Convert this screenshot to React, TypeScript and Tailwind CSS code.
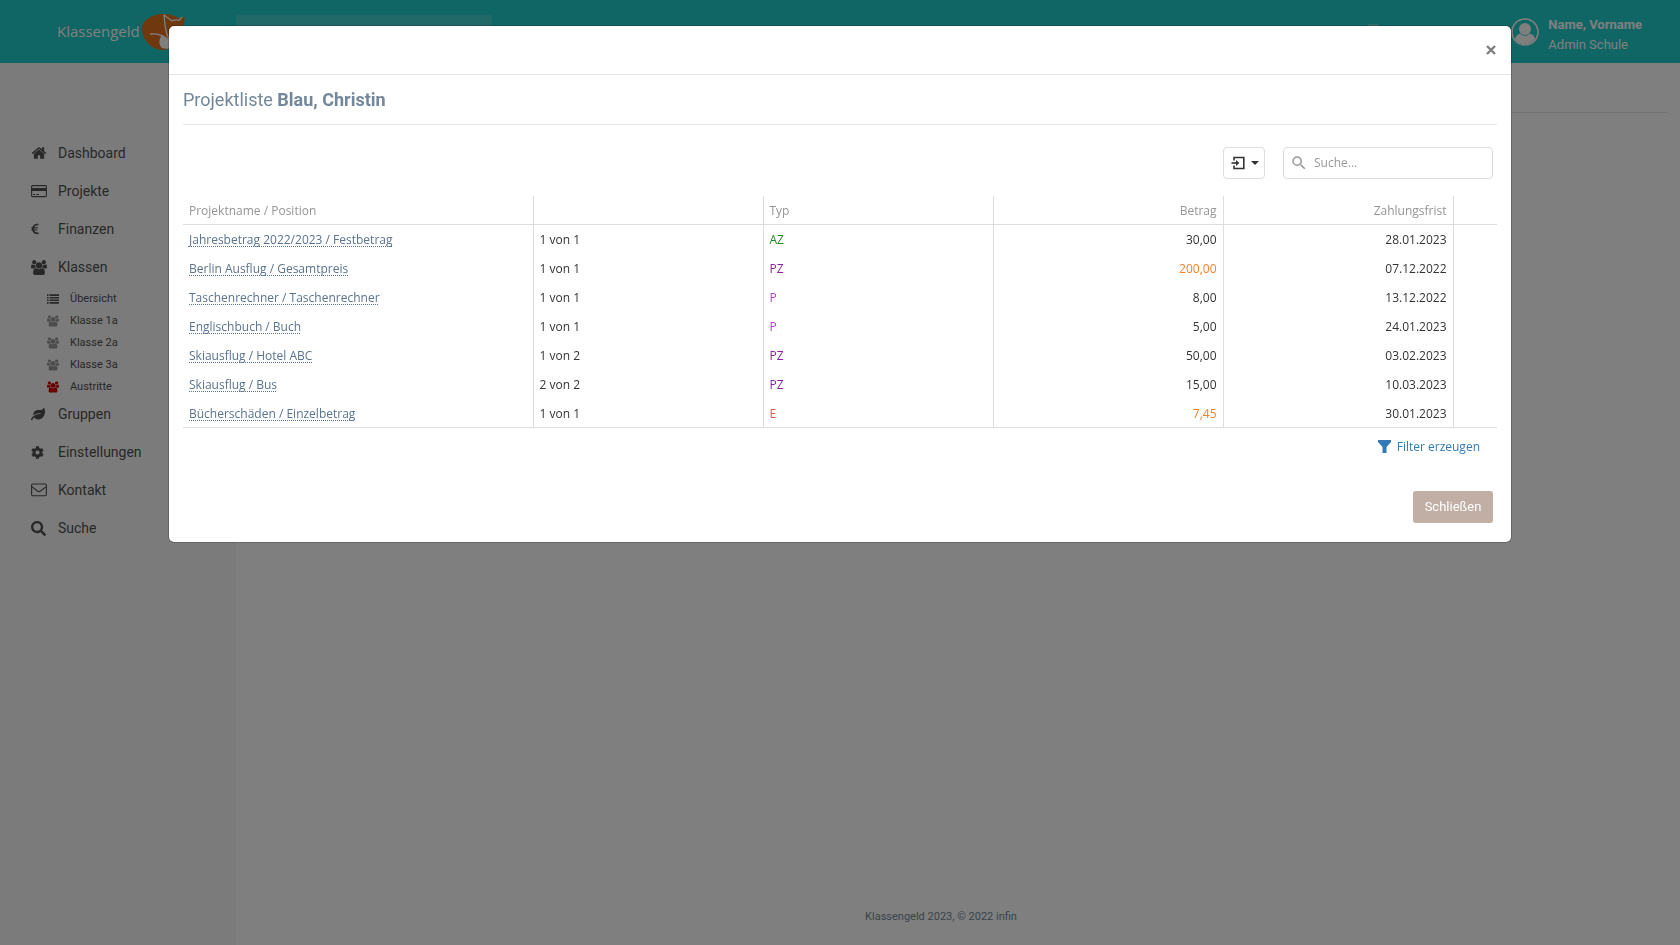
import type { ReactNode } from "react";
import { FaCog, FaEuroSign, FaLeaf, FaSearch } from "react-icons/fa";
import { MdSearch } from "react-icons/md";

function HomeIcon() {
  return (
    <svg viewBox="0 0 1792 1792" className="size-4" fill="currentColor" aria-hidden="true">
      <path d="M1472 992v480q0 26-19 45t-45 19h-384v-384h-256v384h-384q-26 0-45-19t-19-45v-480q0-1 .5-3t.5-3l575-474 575 474q1 2 1 6zm223-69l-62 74q-8 9-21 11h-3q-13 0-21-7l-692-577-692 577q-12 8-24 7-13-2-21-11l-62-74q-8-10-7-23.5t11-21.5l719-599q32-26 76-26t76 26l244 204v-195q0-14 9-23t23-9h192q14 0 23 9t9 23v408l219 182q10 8 11 21.5t-7 23.5z" />
    </svg>
  );
}

function CardIcon() {
  return (
    <svg viewBox="0 0 16 14" className="h-3.5 w-4" aria-hidden="true">
      <rect x="0.6" y="1.6" width="14.8" height="11" rx="0.8" fill="none" stroke="currentColor" strokeWidth="1.1" />
      <path d="M0.5 4h15v3h-15zM2 10h2v1H2zM5 10h3v1H5z" fill="currentColor" />
    </svg>
  );
}

function UsersIcon({ className }: { className: string }) {
  return (
    <svg viewBox="0 0 1920 1792" className={className} fill="currentColor" aria-hidden="true">
      <path d="M593 896q-162 5-265 128h-134q-82 0-138-40.5t-56-118.5q0-353 124-353 6 0 43.5 21t97.5 42.5 119 21.5q67 0 133-23-5 37-5 66 0 139 81 256zm1071 637q0 120-73 189.5t-194 69.5h-874q-121 0-194-69.5t-73-189.5q0-53 3.5-103.5t14-109 26.5-108.5 43-97.5 62-81 85.5-53.5 111.5-20q10 0 43 21.5t73 48 107 48 135 21.5 135-21.5 107-48 73-48 43-21.5q61 0 111.5 20t85.5 53.5 62 81 43 97.5 26.5 108.5 14 109 3.5 103.5zm-1024-1277q0 106-75 181t-181 75-181-75-75-181 75-181 181-75 181 75 75 181zm704 384q0 159-112.5 271.5t-271.5 112.5-271.5-112.5-112.5-271.5 112.5-271.5 271.5-112.5 271.5 112.5 112.5 271.5zm576 225q0 78-56 118.5t-138 40.5h-134q-103-123-265-128 81-117 81-256 0-29-5-66 66 23 133 23 59 0 119-21.5t97.5-42.5 43.5-21q124 0 124 353zm-128-609q0 106-75 181t-181 75-181-75-75-181 75-181 181-75 181 75 75 181z" />
    </svg>
  );
}

function ListIcon() {
  return (
    <svg viewBox="0 0 12 10" className="h-2.5 w-3" fill="currentColor" aria-hidden="true">
      <path d="M0 0.3h1.6v1.6H0zM2.6 0.3H12v1.6H2.6zM0 2.9h1.6v1.6H0zM2.6 2.9H12v1.6H2.6zM0 5.5h1.6v1.6H0zM2.6 5.5H12v1.6H2.6zM0 8.1h1.6v1.6H0zM2.6 8.1H12v1.6H2.6z" />
    </svg>
  );
}

function EnvelopeIcon() {
  return (
    <svg viewBox="0 0 16 14" className="h-3.5 w-4" fill="none" stroke="currentColor" strokeWidth="1.1" aria-hidden="true">
      <rect x="0.6" y="1" width="14.8" height="11.8" rx="1.2" />
      <path d="M0.8 3.6L6.4 8Q8 9.2 9.6 8L15.2 3.6" />
    </svg>
  );
}

function FoxLogo() {
  return (
    <svg viewBox="0 0 46 38" className="h-[38px] w-[46px]" aria-hidden="true">
      <path d="M1 16C1 7 11 1 23 1C28 1 33 2 37 5L44 4C43 9 43 13 41 19C37 29 31 37 21 37C9 36 1 26 1 16Z" fill="#e0701f" />
      <path d="M21 22C26 24 30 29 33 34C29 36 25 36 21 35C17 31 18 26 21 22Z" fill="#fff" />
      <path d="M9 21C17 20 24 23 29 29M31 30C25 24 24 14 23 2L31 8Q35 6 38 7.500L41 4" fill="none" stroke="#fff" strokeWidth="1.300" strokeLinejoin="round" />
    </svg>
  );
}

function UserIcon() {
  return (
    <svg viewBox="0 0 28 28" className="size-7" aria-hidden="true">
      <circle cx="14" cy="14" r="13" fill="none" stroke="currentColor" strokeWidth="1.600" />
      <circle cx="14" cy="11" r="6" fill="currentColor" />
      <path d="M4 21C4.500 18 7 16 9 15.500Q14 20 19 15.500C21.500 16 23.500 18 24 21A12 12 0 0 1 4 21Z" fill="currentColor" />
    </svg>
  );
}

function ExportIcon() {
  return (
    <svg viewBox="0 0 14 14" className="size-3.5" fill="none" stroke="currentColor" strokeWidth="1.600" aria-hidden="true">
      <path d="M3 4.500V1.500H12.800V12.500H3V9.500" />
      <path d="M0.500 7H7" />
      <path d="M5 4L8.400 7L5 10Z" fill="currentColor" stroke="none" />
    </svg>
  );
}

function FilterIcon() {
  return (
    <svg viewBox="0 0 13 13" className="size-[13px]" fill="currentColor" aria-hidden="true">
      <path d="M0 0H13V2L8.500 7V13H4.500V7L0 2Z" />
    </svg>
  );
}

type Item = { label: string; icon: ReactNode };

const topItems: Item[] = [
  { label: "Dashboard", icon: <HomeIcon /> },
  { label: "Projekte", icon: <CardIcon /> },
  { label: "Finanzen", icon: <FaEuroSign className="h-3 w-2" /> },
];

const bottomItems: Item[] = [
  { label: "Gruppen", icon: <FaLeaf className="size-3.5" /> },
  { label: "Einstellungen", icon: <FaCog className="size-[13px]" /> },
  { label: "Kontakt", icon: <EnvelopeIcon /> },
  { label: "Suche", icon: <FaSearch className="size-[15px]" /> },
];

const classItems: Item[] = [
  { label: "Übersicht", icon: <ListIcon /> },
  { label: "Klasse 1a", icon: <UsersIcon className="h-3 w-3 text-[#999]" /> },
  { label: "Klasse 2a", icon: <UsersIcon className="h-3 w-3 text-[#999]" /> },
  { label: "Klasse 3a", icon: <UsersIcon className="h-3 w-3 text-[#999]" /> },
  { label: "Austritte", icon: <UsersIcon className="h-3 w-3 text-[#d00000]" /> },
];

function NavLink({ label, icon }: Item) {
  return (
    <a href="#" className="flex h-8 items-center text-[14px]">
      <span className="flex w-[27px] items-center">{icon}</span>
      {label}
    </a>
  );
}

type Row = { name: string; pos: string; type: string; typeClass: string; amount: string; amountClass: string; due: string };

const rows: Row[] = [
  { name: "Jahresbetrag 2022/2023 / Festbetrag", pos: "1 von 1", type: "AZ", typeClass: "text-[#228b22]", amount: "30,00", amountClass: "", due: "28.01.2023" },
  { name: "Berlin Ausflug / Gesamtpreis", pos: "1 von 1", type: "PZ", typeClass: "text-[#8b1fa9]", amount: "200,00", amountClass: "text-[#f5822a]", due: "07.12.2022" },
  { name: "Taschenrechner / Taschenrechner", pos: "1 von 1", type: "P", typeClass: "text-[#b045c8]", amount: "8,00", amountClass: "", due: "13.12.2022" },
  { name: "Englischbuch / Buch", pos: "1 von 1", type: "P", typeClass: "text-[#b045c8]", amount: "5,00", amountClass: "", due: "24.01.2023" },
  { name: "Skiausflug / Hotel ABC", pos: "1 von 2", type: "PZ", typeClass: "text-[#8b1fa9]", amount: "50,00", amountClass: "", due: "03.02.2023" },
  { name: "Skiausflug / Bus", pos: "2 von 2", type: "PZ", typeClass: "text-[#8b1fa9]", amount: "15,00", amountClass: "", due: "10.03.2023" },
  { name: "Bücherschäden / Einzelbetrag", pos: "1 von 1", type: "E", typeClass: "text-[#ee4f4f]", amount: "7,45", amountClass: "text-[#f5822a]", due: "30.01.2023" },
];

function ProjectTable() {
  return (
    <table className="w-full table-fixed border-collapse border-b border-[#ddd] text-left text-[#333]">
      <colgroup>
        <col />
        <col className="w-[230px]" />
        <col className="w-[230px]" />
        <col className="w-[230px]" />
        <col className="w-[230px]" />
        <col className="w-11" />
      </colgroup>
      <thead>
        <tr className="h-7 border-b border-[#ddd] text-[#959595]">
          <th className="border-r border-[#ddd] px-1.5 pt-[3px] font-normal">Projektname / Position</th>
          <th className="border-r border-[#ddd] px-1.5 pt-[3px] font-normal" />
          <th className="border-r border-[#ddd] px-1.5 pt-[3px] font-normal">Typ</th>
          <th className="border-r border-[#ddd] px-1.5 pt-[3px] text-right font-normal">Betrag</th>
          <th className="border-r border-[#ddd] px-1.5 pt-[3px] text-right font-normal">Zahlungsfrist</th>
          <th />
        </tr>
      </thead>
      <tbody>
        {rows.map((row) => (
          <tr key={row.name} className="h-[29px]">
            <td className="border-r border-[#ddd] px-1.5 pt-[3px]">
              <a href="#" className="text-[#5a738e] underline decoration-dotted decoration-1 underline-offset-2 [text-decoration-skip-ink:none]">
                {row.name}
              </a>
            </td>
            <td className="border-r border-[#ddd] px-1.5 pt-[3px]">{row.pos}</td>
            <td className="border-r border-[#ddd] px-1.5 pt-[3px]">
              <span className={row.typeClass}>{row.type}</span>
            </td>
            <td className="border-r border-[#ddd] px-1.5 pt-[3px] text-right">
              <span className={row.amountClass}>{row.amount}</span>
            </td>
            <td className="border-r border-[#ddd] px-1.5 pt-[3px] text-right">{row.due}</td>
            <td />
          </tr>
        ))}
      </tbody>
    </table>
  );
}

function ProjectDialog() {
  return (
    <div role="dialog" aria-modal="true" aria-labelledby="dialog-title" className="w-4/5 rounded-md border border-black/20 bg-white bg-clip-padding">
      <header className="flex h-[49px] items-center justify-end border-b border-[#e5e5e5] pr-3">
        <button type="button" aria-label="Schließen" className="flex size-4 items-center justify-center text-[#7f7f7f]">
          <svg viewBox="0 0 10 10" className="size-2.5" stroke="currentColor" strokeWidth="2.400" aria-hidden="true">
            <path d="M1 1L9 9M9 1L1 9" />
          </svg>
        </button>
      </header>
      <div className="px-3.5 pb-[19px]">
        <h2 id="dialog-title" className="flex h-[50px] items-center whitespace-pre border-b border-[#e5e5e5] text-[18px] text-[#73879c]">
          Projektliste <strong className="font-bold">Blau, Christin</strong>
        </h2>
        <div className="font-['Open_Sans',sans-serif] text-[12px]">
          <div className="flex justify-end gap-[18px] pt-[22px] pr-1 pb-[17px]">
            <button type="button" aria-label="Exportieren" className="flex h-8 w-[42px] items-center justify-center gap-1.5 rounded border border-[#ddd] pl-0.5 text-[#333]">
              <ExportIcon />
              <span className="border-x-[4px] border-t-[4px] border-x-transparent border-t-[#333]" />
            </button>
            <label className="flex h-8 w-[210px] items-center gap-1.5 rounded border border-[#ddd] pl-1.5">
              <MdSearch className="size-[18px] shrink-0 text-[#999]" aria-hidden="true" />
              <input type="search" aria-label="Suche" placeholder="Suche..." className="w-full min-w-0 outline-none placeholder:text-[#999]" />
            </label>
          </div>
          <ProjectTable />
          <div className="flex justify-end pt-[9px] pr-[17px]">
            <button type="button" className="flex h-5 items-center gap-1.5 text-[#337ab7]">
              <FilterIcon />
              Filter erzeugen
            </button>
          </div>
        </div>
        <footer className="flex justify-end pt-[34px] pr-1">
          <button type="button" className="h-8 w-20 rounded-[3px] bg-[#c1aea5] text-[13px] text-white">
            Schließen
          </button>
        </footer>
      </div>
    </div>
  );
}

export default function App() {
  return (
    <div className="flex min-h-screen flex-col bg-white font-[Roboto,sans-serif] text-[#505050]">
      <header className="flex h-[63px] items-center bg-[#20ccc8] pr-[38px] pl-[57px] text-white">
        <a href="#" className="flex items-center gap-px font-['Open_Sans',sans-serif] text-[15px] font-medium">
          Klassengeld
          <FoxLogo />
        </a>
        <div className="ml-[49px] h-[34px] w-64 bg-white/15" />
        <button type="button" aria-label="Nachrichten" className="mr-[133px] ml-auto h-[15px] w-2.5 bg-white/30" />
        <div className="flex items-center gap-[9px]">
          <UserIcon />
          <div className="pt-1.5 text-[13px] leading-5">
            <p className="font-bold">Name, Vorname</p>
            <p>Admin Schule</p>
          </div>
        </div>
      </header>
      <div className="flex flex-1">
        <nav className="w-[236px] bg-[#f7f7f7] pt-[74px] pl-[31px]">
          <ul>
            {topItems.map((item) => (
              <li key={item.label} className="mb-1.5">
                <NavLink {...item} />
              </li>
            ))}
            <li>
              <NavLink label="Klassen" icon={<UsersIcon className="h-[15px] w-4" />} />
              <ul className="pt-[5px] pl-4">
                {classItems.map((item) => (
                  <li key={item.label}>
                    <a href="#" className="flex h-[22px] items-center text-[11px]">
                      <span className="flex w-[23px] items-center">{item.icon}</span>
                      {item.label}
                    </a>
                  </li>
                ))}
              </ul>
            </li>
            {bottomItems.map((item) => (
              <li key={item.label} className="mb-1.5">
                <NavLink {...item} />
              </li>
            ))}
          </ul>
        </nav>
        <main className="flex flex-1 flex-col justify-between pr-3">
          <div className="h-[50px] border-b border-[#e5e5e5]" />
          <footer className="pr-[22px] pb-5 text-center text-[11px] text-[#73879c]">Klassengeld 2023, © 2022 infin</footer>
        </main>
      </div>
      <div className="fixed inset-0 flex items-start justify-center bg-black/50 pt-[25px]">
        <ProjectDialog />
      </div>
    </div>
  );
}
